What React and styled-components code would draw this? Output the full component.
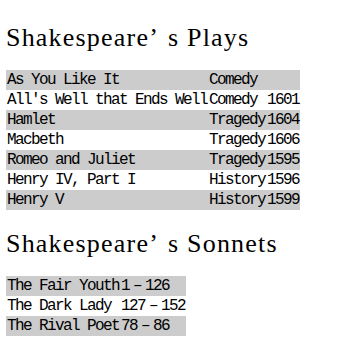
import React from 'react';
import styled, { createGlobalStyle } from 'styled-components';

const GlobalStyle = createGlobalStyle`
  html, body {
    margin: 0;
    padding: 0;
    background: #ffffff;
  }
`;

const Page = styled.div`
  padding: 0 6px;
  color: #000;
`;

const Heading = styled.h2`
  margin: ${props => props.$top}px 0 18px;
  height: 28px;
  font-family: "Liberation Serif", "Times New Roman", serif;
  font-size: 26px;
  font-weight: normal;
  line-height: 28px;
  letter-spacing: 1.2px;
  white-space: nowrap;
`;

const Quote = styled.span`
  display: inline-block;
  margin-right: 9px;
`;

const Table = styled.table`
  border-collapse: collapse;
  font-family: "Liberation Mono", "Courier New", monospace;
  font-size: 16px;
  letter-spacing: -1.6px;
  white-space: nowrap;

  tr:nth-child(odd) {
    background: #cccccc;
  }
`;

const Cell = styled.td`
  height: 20px;
  padding: 0 1px;
  line-height: 20px;
  vertical-align: middle;
`;

const Dash = styled.span`
  display: inline-block;
  width: 16px;
  text-align: center;
`;

const plays = [
  ['As You Like It', 'Comedy', ''],
  ["All's Well that Ends Well", 'Comedy', '1601'],
  ['Hamlet', 'Tragedy', '1604'],
  ['Macbeth', 'Tragedy', '1606'],
  ['Romeo and Juliet', 'Tragedy', '1595'],
  ['Henry IV, Part I', 'History', '1596'],
  ['Henry V', 'History', '1599'],
];

const sonnets = [
  ['The Fair Youth', '1', '126'],
  ['The Dark Lady', '127', '152'],
  ['The Rival Poet', '78', '86'],
];

const Title = ({ top, children }) => (
  <Heading $top={top}>
    Shakespeare<Quote>’</Quote>s {children}
  </Heading>
);

export default function App() {
  return (
    <Page>
      <GlobalStyle />
      <Title top={24}>Plays</Title>
      <Table>
        <tbody>
          {plays.map(([name, genre, year]) => (
            <tr key={name}>
              <Cell>{name}</Cell>
              <Cell>{genre}</Cell>
              <Cell>{year}</Cell>
            </tr>
          ))}
        </tbody>
      </Table>

      <Title top={20}>Sonnets</Title>
      <Table>
        <tbody>
          {sonnets.map(([name, from, to]) => (
            <tr key={name}>
              <Cell>{name}</Cell>
              <Cell>
                {from}
                <Dash>–</Dash>
                {to}
              </Cell>
            </tr>
          ))}
        </tbody>
      </Table>
    </Page>
  );
}
